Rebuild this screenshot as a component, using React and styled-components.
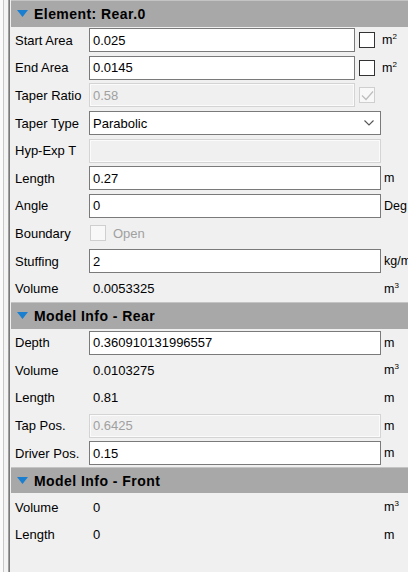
import React from "react";
import styled, { createGlobalStyle } from "styled-components";

const Global = createGlobalStyle`
  html, body { margin: 0; padding: 0; background: #f0f0f0; }
  body { font-family: "Liberation Sans", Arial, sans-serif; font-size: 13px; color: #000; }
  #root { width: 408px; height: 572px; overflow: hidden; }
`;

const Frame = styled.div`
  display: flex;
  width: 408px;
  height: 572px;
  overflow: hidden;
  background: #f0f0f0;
`;

const SideStrip = styled.div`
  width: 8px;
  flex: none;
  background: #f4f4f4;
  border-left: 3px solid #fbfbfb;
  box-sizing: border-box;
  position: relative;
  &::after {
    content: "";
    position: absolute;
    left: 0;
    top: 0;
    bottom: 0;
    width: 1px;
    background: #c8c8c8;
  }
`;

const Panel = styled.div`
  flex: 1;
  min-width: 0;
  border-left: 1px solid #a0a0a0;
  box-shadow: inset 1px 0 0 #7a7a7a;
  padding-left: 2px;
  display: flex;
  flex-direction: column;
  overflow: hidden;
`;

const Header = styled.div`
  height: 26.5px;
  flex: none;
  background: #a8a8a8;
  display: flex;
  align-items: center;
  gap: 6px;
  padding-left: 6px;
  font-weight: bold;
  font-size: 14px;
  letter-spacing: 0.45px;
  color: #000;
  white-space: nowrap;
  border-top: 1px solid #c4c4c4;
  box-sizing: border-box;
`;

const Arrow = styled.svg`
  width: 11px;
  height: 8px;
  flex: none;
`;

const Row = styled.div`
  height: 27.6px;
  flex: none;
  display: grid;
  grid-template-columns: 78px 1fr;
  align-items: center;
  white-space: nowrap;
`;

const Label = styled.div`
  padding-left: 4px;
  font-size: 13px;
  color: #000;
`;

const Cell = styled.div`
  display: flex;
  align-items: center;
  min-width: 0;
`;

const TextBox = styled.div`
  box-sizing: border-box;
  height: 24px;
  width: ${(p) => p.$w}px;
  flex: none;
  background: ${(p) => (p.$disabled ? "#f0f0f0" : "#fff")};
  border: 1px solid ${(p) => (p.$disabled ? "#d4d4d4" : "#7a7a7a")};
  box-shadow: ${(p) => (p.$disabled ? "inset 0 0 0 1px #fbfbfb" : "none")};
  color: ${(p) => (p.$disabled ? "#a0a0a0" : "#000")};
  display: flex;
  align-items: center;
  padding-left: 3px;
  font-size: 13px;
  position: relative;
`;

const Chevron = styled.svg`
  position: absolute;
  right: 6px;
  top: 8px;
  width: 10px;
  height: 6px;
`;

const Check = styled.div`
  box-sizing: border-box;
  width: 16px;
  height: 16px;
  flex: none;
  margin-left: ${(p) => p.$ml}px;
  border: 1px solid ${(p) => (p.$disabled ? "#cfcfcf" : "#333")};
  background: ${(p) => (p.$disabled ? "#f8f8f8" : "#fff")};
  display: flex;
  align-items: center;
  justify-content: center;
`;

const Unit = styled.span`
  margin-left: ${(p) => p.$ml}px;
  font-size: 12.5px;
  color: #000;
  flex: none;
`;

const Value = styled.span`
  box-sizing: border-box;
  padding-left: 4px;
  font-size: 13px;
  color: #000;
  width: ${(p) => p.$w}px;
  flex: none;
`;

const CheckLabel = styled.span`
  margin-left: 7px;
  color: #a0a0a0;
  font-size: 13px;
`;

const Sup = styled.sup`
  font-size: 8px;
  vertical-align: 5px;
  line-height: 0;
`;

const ArrowIcon = () => (
  <Arrow viewBox="0 0 11 8">
    <polygon points="0,0 11,0 5.5,7" fill="#1a7fd0" />
  </Arrow>
);

const Tick = () => (
  <svg width="13" height="11" viewBox="0 0 13 11">
    <polyline points="1,5.5 5,9.5 12,1.5" fill="none" stroke="#bdbdbd" strokeWidth="1.2" />
  </svg>
);

const Section = ({ title }) => (
  <Header>
    <ArrowIcon />
    <span>{title}</span>
  </Header>
);

const m2 = (
  <>
    m<Sup>2</Sup>
  </>
);
const m3 = (
  <>
    m<Sup>3</Sup>
  </>
);

export default function App() {
  return (
    <>
      <Global />
      <Frame>
        <SideStrip />
        <Panel>
          <Section title="Element: Rear.0" />
          <Row>
            <Label>Start Area</Label>
            <Cell>
              <TextBox $w={266}>0.025</TextBox>
              <Check $ml={4} />
              <Unit $ml={7}>{m2}</Unit>
            </Cell>
          </Row>
          <Row>
            <Label>End Area</Label>
            <Cell>
              <TextBox $w={266}>0.0145</TextBox>
              <Check $ml={4} />
              <Unit $ml={7}>{m2}</Unit>
            </Cell>
          </Row>
          <Row>
            <Label>Taper Ratio</Label>
            <Cell>
              <TextBox $w={266} $disabled>0.58</TextBox>
              <Check $ml={4} $disabled>
                <Tick />
              </Check>
            </Cell>
          </Row>
          <Row>
            <Label>Taper Type</Label>
            <Cell>
              <TextBox $w={292}>
                Parabolic
                <Chevron viewBox="0 0 10 6">
                  <polyline points="0.5,0.5 5,5 9.5,0.5" fill="none" stroke="#555" strokeWidth="1.1" />
                </Chevron>
              </TextBox>
            </Cell>
          </Row>
          <Row>
            <Label>Hyp-Exp T</Label>
            <Cell>
              <TextBox $w={292} $disabled />
            </Cell>
          </Row>
          <Row>
            <Label>Length</Label>
            <Cell>
              <TextBox $w={292}>0.27</TextBox>
              <Unit $ml={3}>m</Unit>
            </Cell>
          </Row>
          <Row>
            <Label>Angle</Label>
            <Cell>
              <TextBox $w={292}>0</TextBox>
              <Unit $ml={3}>Deg</Unit>
            </Cell>
          </Row>
          <Row>
            <Label>Boundary</Label>
            <Cell>
              <Check $ml={1} $disabled />
              <CheckLabel>Open</CheckLabel>
            </Cell>
          </Row>
          <Row>
            <Label>Stuffing</Label>
            <Cell>
              <TextBox $w={292}>2</TextBox>
              <Unit $ml={3}>kg/m³</Unit>
            </Cell>
          </Row>
          <Row>
            <Label>Volume</Label>
            <Cell>
              <Value $w={292}>0.0053325</Value>
              <Unit $ml={3}>{m3}</Unit>
            </Cell>
          </Row>

          <Section title="Model Info - Rear" />
          <Row>
            <Label>Depth</Label>
            <Cell>
              <TextBox $w={292}>0.360910131996557</TextBox>
              <Unit $ml={3}>m</Unit>
            </Cell>
          </Row>
          <Row>
            <Label>Volume</Label>
            <Cell>
              <Value $w={292}>0.0103275</Value>
              <Unit $ml={3}>{m3}</Unit>
            </Cell>
          </Row>
          <Row>
            <Label>Length</Label>
            <Cell>
              <Value $w={292}>0.81</Value>
              <Unit $ml={3}>m</Unit>
            </Cell>
          </Row>
          <Row>
            <Label>Tap Pos.</Label>
            <Cell>
              <TextBox $w={292} $disabled>0.6425</TextBox>
              <Unit $ml={3}>m</Unit>
            </Cell>
          </Row>
          <Row>
            <Label>Driver Pos.</Label>
            <Cell>
              <TextBox $w={292}>0.15</TextBox>
              <Unit $ml={3}>m</Unit>
            </Cell>
          </Row>

          <Section title="Model Info - Front" />
          <Row>
            <Label>Volume</Label>
            <Cell>
              <Value $w={292}>0</Value>
              <Unit $ml={3}>{m3}</Unit>
            </Cell>
          </Row>
          <Row>
            <Label>Length</Label>
            <Cell>
              <Value $w={292}>0</Value>
              <Unit $ml={3}>m</Unit>
            </Cell>
          </Row>
        </Panel>
      </Frame>
    </>
  );
}
